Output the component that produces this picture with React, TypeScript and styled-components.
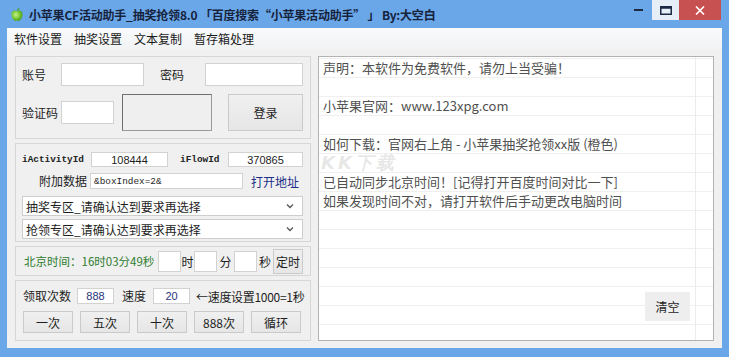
import React from "react";
import styled, { createGlobalStyle } from "styled-components";

const Global = createGlobalStyle`
  html, body { margin: 0; padding: 0; background: #6aa7e9; }
  body { font-family: "Noto Sans CJK SC", "Noto Sans", sans-serif; font-size: 12px; color: #1e1e1e; }
  * { box-sizing: border-box; }
`;

const Window = styled.div`
  width: 729px;
  height: 357px;
  background: #6aa7e9;
  padding: 0 7px 9px 7px;
  display: flex;
  flex-direction: column;
  overflow: hidden;
`;

const TitleBar = styled.div`
  height: 28px;
  display: flex;
  align-items: flex-start;
  flex-shrink: 0;
`;

const TitleLeft = styled.div`
  height: 28px;
  display: flex;
  align-items: center;
  padding-left: 3px;
  gap: 5px;
`;

const TitleText = styled.span`
  font-weight: 700;
  font-size: 12px;
  color: #16233d;
  white-space: nowrap;
  letter-spacing: -0.2px;
`;

const Controls = styled.div`
  margin-left: auto;
  margin-right: 1px;
  display: flex;
  height: 20px;
`;

const CtrlBtn = styled.div<{ $w: number; $bg: string }>`
  width: ${(p) => p.$w}px;
  height: 20px;
  background: ${(p) => p.$bg};
  display: flex;
  align-items: center;
  justify-content: center;
`;

const Client = styled.div`
  flex: 1;
  background: #f0f0f0;
  display: flex;
  flex-direction: column;
`;

const MenuBar = styled.div`
  height: 22px;
  flex-shrink: 0;
  display: flex;
  align-items: center;
  padding-left: 1px;
  background: linear-gradient(#f9fafb, #f1f2f4);
`;

const MenuItem = styled.span`
  padding: 0 6px 0 6px;
  font-size: 12px;
  line-height: 20px;
  color: #1a1a1a;
`;

const Body = styled.div`
  flex: 1;
  display: flex;
  gap: 7px;
  padding: 6px 8px 7px 8px;
`;

const LeftCol = styled.div`
  width: 296px;
  display: flex;
  flex-direction: column;
  gap: 4px;
`;

const Group = styled.div<{ $h: number; $pad: string }>`
  height: ${(p) => p.$h}px;
  border: 1px solid #d6d6d6;
  background: #f0f0f0;
  padding: ${(p) => p.$pad};
  display: flex;
  flex-direction: column;
`;

const Row = styled.div<{ $h: number; $mt?: number }>`
  height: ${(p) => p.$h}px;
  margin-top: ${(p) => p.$mt ?? 0}px;
  display: flex;
  align-items: center;
  flex-shrink: 0;
`;

const Label = styled.span<{ $w: number; $ml?: number; $align?: string; $pr?: number }>`
  width: ${(p) => p.$w}px;
  margin-left: ${(p) => p.$ml ?? 0}px;
  padding-right: ${(p) => p.$pr ?? 0}px;
  text-align: ${(p) => p.$align ?? "left"};
  font-size: 12px;
  line-height: 16px;
  white-space: nowrap;
  flex-shrink: 0;
  color: #1e1e1e;
`;

const MonoLabel = styled.span<{ $w: number; $pl?: number }>`
  width: ${(p) => p.$w}px;
  padding-left: ${(p) => p.$pl ?? 0}px;
  font-family: "Liberation Mono", "DejaVu Sans Mono", monospace;
  font-weight: 700;
  font-size: 9.4px;
  line-height: 14px;
  color: #222;
  flex-shrink: 0;
  white-space: nowrap;
`;

const TextBox = styled.div<{ $w: number; $h: number; $ml?: number; $center?: boolean; $color?: string; $mono?: boolean }>`
  width: ${(p) => p.$w}px;
  height: ${(p) => p.$h}px;
  margin-left: ${(p) => p.$ml ?? 0}px;
  background: #fff;
  border: 1px solid #d2d2d2;
  flex-shrink: 0;
  display: flex;
  align-items: center;
  justify-content: ${(p) => (p.$center ? "center" : "flex-start")};
  padding-left: ${(p) => (p.$center ? 0 : 3)}px;
  font-family: ${(p) => (p.$mono ? '"Liberation Mono", "DejaVu Sans Mono", monospace' : '"Liberation Sans", "Noto Sans", sans-serif')};
  font-size: ${(p) => (p.$mono ? "9.4px" : "11px")};
  color: ${(p) => p.$color ?? "#1e1e1e"};
  white-space: nowrap;
  overflow: hidden;
`;

const Captcha = styled.div`
  width: 90px;
  height: 37px;
  margin-left: 8px;
  background: #efefef;
  border: 1px solid #9a9a9a;
  border-top-color: #6f6f6f;
  border-left-color: #6f6f6f;
  flex-shrink: 0;
`;

const Button = styled.div<{ $w: number; $h: number; $ml?: number }>`
  width: ${(p) => p.$w}px;
  height: ${(p) => p.$h}px;
  margin-left: ${(p) => p.$ml ?? 0}px;
  background: linear-gradient(#f0f0f0, #e6e6e6);
  border: 1px solid #cacaca;
  display: flex;
  align-items: center;
  justify-content: center;
  font-size: 12px;
  color: #1e1e1e;
  flex-shrink: 0;
  white-space: nowrap;
`;

const Link = styled.span`
  flex: 1;
  text-align: center;
  color: #1b2f86;
  font-size: 12px;
  padding-left: 4px;
`;

const Select = styled.div<{ $mt: number }>`
  width: 281px;
  height: 20px;
  margin-top: ${(p) => p.$mt}px;
  background: #fff;
  border: 1px solid #cdcdcd;
  display: flex;
  align-items: center;
  padding: 0 8px 0 3px;
  font-size: 12px;
  color: #1e1e1e;
  flex-shrink: 0;
`;

const SelectText = styled.span`
  flex: 1;
  white-space: nowrap;
`;

const TimeText = styled.span`
  width: 134px;
  color: #2f7d2f;
  font-size: 11.5px;
  white-space: nowrap;
  flex-shrink: 0;
`;

const Unit = styled.span<{ $w: number }>`
  width: ${(p) => p.$w}px;
  text-align: center;
  font-size: 12px;
  flex-shrink: 0;
`;

const Hint = styled.span`
  margin-left: 6px;
  font-size: 12px;
  white-space: nowrap;
  letter-spacing: -0.3px;
`;

const ButtonRow = styled.div`
  height: 22px;
  margin-top: 7px;
  display: flex;
  gap: 7px;
`;

const LogBox = styled.div`
  position: relative;
  width: 396px;
  height: 285px;
  border: 1px solid #b2b2b2;
  background-color: #fff;
  background-image:
    linear-gradient(to right, transparent 376px, #ececec 376px, #ececec 377px, transparent 377px),
    repeating-linear-gradient(to bottom, transparent 0px, transparent 1px, #efefef 1px, #efefef 2px, transparent 2px, transparent 19px);
  padding: 1px 4px;
  overflow: hidden;
`;

const LogLine = styled.div`
  height: 19px;
  line-height: 19px;
  font-size: 13px;
  color: #505050;
  white-space: nowrap;
  position: relative;
`;

const ClearBtn = styled.div`
  position: absolute;
  right: 23px;
  bottom: 19px;
  width: 45px;
  height: 29px;
  background: #eeeeee;
  display: flex;
  align-items: center;
  justify-content: center;
  font-size: 12px;
  color: #1e1e1e;
`;

const Watermark = styled.div`
  position: absolute;
  left: 2px;
  top: 97px;
  height: 18px;
  line-height: 18px;
  font-family: "DejaVu Sans", sans-serif;
  font-weight: 700;
  font-style: italic;
  font-size: 18px;
  letter-spacing: 3px;
  color: rgba(160, 160, 160, 0.25);
  white-space: nowrap;
  pointer-events: none;
`;

const Chevron = () => (
  <svg width="8" height="6" viewBox="0 0 8 6">
    <polyline points="1,1.5 4,4.5 7,1.5" fill="none" stroke="#555" strokeWidth="1.3" />
  </svg>
);

const Apple = () => (
  <svg width="14" height="15" viewBox="0 0 14 15">
    <defs>
      <radialGradient id="ag" cx="0.4" cy="0.4" r="0.7">
        <stop offset="0" stopColor="#c8f08a" />
        <stop offset="0.6" stopColor="#6cc22c" />
        <stop offset="1" stopColor="#3d8c14" />
      </radialGradient>
    </defs>
    <path d="M7 4.2 C5 3 1.5 3.4 1.5 7.5 C1.5 11 4 14 5.5 14 C6.3 14 6.6 13.6 7 13.6 C7.4 13.6 7.7 14 8.5 14 C10 14 12.5 11 12.5 7.5 C12.5 3.4 9 3 7 4.2 Z" fill="url(#ag)" />
    <path d="M7 4 C7 2.5 8 1.2 9.5 1 C9.4 2.6 8.4 3.7 7 4 Z" fill="#4a9e1a" />
  </svg>
);

export default function App() {
  return (
    <>
      <Global />
      <Window>
        <TitleBar>
          <TitleLeft>
            <Apple />
            <TitleText>小苹果CF活动助手_抽奖抢领8.0 「百度搜索“小苹果活动助手” 」 By:大空白</TitleText>
          </TitleLeft>
          <Controls>
            <CtrlBtn $w={26} $bg="transparent">
              <svg width="10" height="4" viewBox="0 0 10 4">
                <rect x="0" y="1" width="9" height="2" fill="#1c2a44" />
              </svg>
            </CtrlBtn>
            <CtrlBtn $w={27} $bg="#e6eef7">
              <svg width="12" height="9" viewBox="0 0 12 9">
                <rect x="0.75" y="0.75" width="10.5" height="7.5" fill="none" stroke="#1c2a44" strokeWidth="1.5" />
                <rect x="0.75" y="0.75" width="10.5" height="2" fill="#1c2a44" />
              </svg>
            </CtrlBtn>
            <CtrlBtn $w={42} $bg="#c75050">
              <svg width="10" height="9" viewBox="0 0 10 9">
                <path d="M1 0.5 L9 8.5 M9 0.5 L1 8.5" stroke="#fff" strokeWidth="1.6" />
              </svg>
            </CtrlBtn>
          </Controls>
        </TitleBar>
        <Client>
          <MenuBar>
            <MenuItem>软件设置</MenuItem>
            <MenuItem>抽奖设置</MenuItem>
            <MenuItem>文本复制</MenuItem>
            <MenuItem>暂存箱处理</MenuItem>
          </MenuBar>
          <Body>
            <LeftCol>
              <Group $h={83} $pad="6px 7px 0 6px">
                <Row $h={23}>
                  <Label $w={39}>账号</Label>
                  <TextBox $w={83} $h={23} />
                  <Label $w={45} $ml={16}>密码</Label>
                  <TextBox $w={98} $h={23} />
                </Row>
                <Row $h={37} $mt={8}>
                  <Label $w={39}>验证码</Label>
                  <TextBox $w={53} $h={23} />
                  <Captcha />
                  <Button $w={75} $h={37} $ml={16}>登录</Button>
                </Row>
              </Group>
              <Group $h={99} $pad="8px 7px 0 6px">
                <Row $h={15}>
                  <MonoLabel $w={69}>iActivityId</MonoLabel>
                  <TextBox $w={77} $h={15} $center>108444</TextBox>
                  <MonoLabel $w={60} $pl={12}>iFlowId</MonoLabel>
                  <TextBox $w={75} $h={15} $center>370865</TextBox>
                </Row>
                <Row $h={16} $mt={6}>
                  <Label $w={68} $align="right" $pr={3}>附加数据</Label>
                  <TextBox $w={153} $h={16} $mono>&amp;boxIndex=2&amp;</TextBox>
                  <Link>打开地址</Link>
                </Row>
                <Select $mt={7}>
                  <SelectText>抽奖专区_请确认达到要求再选择</SelectText>
                  <Chevron />
                </Select>
                <Select $mt={3}>
                  <SelectText>抢领专区_请确认达到要求再选择</SelectText>
                  <Chevron />
                </Select>
              </Group>
              <Group $h={30} $pad="0 7px 0 8px">
                <Row $h={28}>
                  <TimeText>北京时间：16时03分49秒</TimeText>
                  <TextBox $w={23} $h={21} />
                  <Unit $w={13}>时</Unit>
                  <TextBox $w={23} $h={21} />
                  <Unit $w={17}>分</Unit>
                  <TextBox $w={23} $h={21} />
                  <Unit $w={16}>秒</Unit>
                  <Button $w={30} $h={25}>定时</Button>
                </Row>
              </Group>
              <Group $h={61} $pad="7px 7px 0 7px">
                <Row $h={16}>
                  <Label $w={54}>领取次数</Label>
                  <TextBox $w={37} $h={16} $center $color="#27357a">888</TextBox>
                  <Label $w={31} $ml={8}>速度</Label>
                  <TextBox $w={37} $h={16} $center $color="#27357a">20</TextBox>
                  <Hint>←速度设置1000=1秒</Hint>
                </Row>
                <ButtonRow>
                  <Button $w={50} $h={22}>一次</Button>
                  <Button $w={50} $h={22}>五次</Button>
                  <Button $w={50} $h={22}>十次</Button>
                  <Button $w={50} $h={22}>888次</Button>
                  <Button $w={50} $h={22}>循环</Button>
                </ButtonRow>
              </Group>
            </LeftCol>
            <LogBox>
              <LogLine>声明：本软件为免费软件，请勿上当受骗！</LogLine>
              <LogLine />
              <LogLine>小苹果官网：www.123xpg.com</LogLine>
              <LogLine />
              <LogLine>如何下载：官网右上角 - 小苹果抽奖抢领xx版 (橙色)</LogLine>
              <LogLine />
              <LogLine>已自动同步北京时间！[记得打开百度时间对比一下]</LogLine>
              <LogLine>如果发现时间不对，请打开软件后手动更改电脑时间</LogLine>
              <Watermark>KK下载</Watermark>
              <ClearBtn>清空</ClearBtn>
            </LogBox>
          </Body>
        </Client>
      </Window>
    </>
  );
}
